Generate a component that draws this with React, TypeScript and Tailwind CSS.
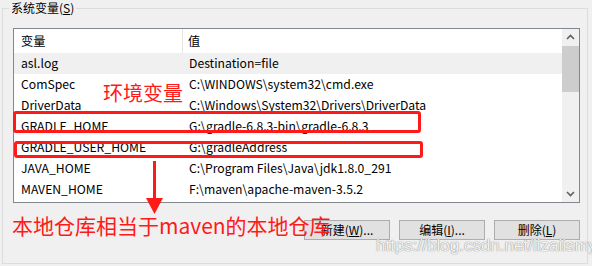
const rows = [
  ["asl.log", "Destination=file"],
  ["ComSpec", "C:\\WINDOWS\\system32\\cmd.exe"],
  ["DriverData", "C:\\Windows\\System32\\Drivers\\DriverData"],
  ["GRADLE_HOME", "G:\\gradle-6.8.3-bin\\gradle-6.8.3"],
  ["GRADLE_USER_HOME", "G:\\gradleAddress"],
  ["JAVA_HOME", "C:\\Program Files\\Java\\jdk1.8.0_291"],
  ["MAVEN_HOME", "F:\\maven\\apache-maven-3.5.2"],
];

const ui = { fontFamily: '"Noto Sans CJK SC", "Noto Sans", sans-serif' };

function WinButton({ label, keyChar }: { label: string; keyChar: string }) {
  return (
    <button className="w-[86px] h-[20px] bg-[#e1e1e1] border border-[#adadad] text-[12px] leading-[18px] text-black">
      {label}(<span className="underline">{keyChar}</span>)
      {keyChar !== "L" && "..."}
    </button>
  );
}

export default function App() {
  return (
    <div className="relative w-[592px] h-[266px] bg-[#f0f0f0] overflow-hidden" style={ui}>
      {/* group box */}
      <div className="relative ml-[2px] mt-[8px] w-[586px] h-[256px] border border-[#dcdcdc] px-[10px] pt-[19px]">
        <div className="absolute left-[6px] top-[-10px] px-[2px] bg-[#f0f0f0] text-[12px] leading-[18px] text-black">
          系统变量(<span className="underline">S</span>)
        </div>

        {/* list view */}
        <div className="flex w-[567px] h-[175px] border border-[#828790] bg-white">
          <div className="flex-1 flex flex-col text-[12.2px] text-black">
            <div className="flex h-[24px] items-center">
              <div className="w-[169px] h-full pl-[7px] flex items-center border-r border-[#e5e5e5]">变量</div>
              <div className="pl-[5px]">值</div>
            </div>
            {rows.map(([name, value], i) => (
              <div
                key={name}
                className={`flex h-[21px] items-center ${i === 0 ? "bg-[#f0f0f0]" : ""}`}
              >
                <div className="w-[169px] pl-[7px]">{name}</div>
                <div className="pl-[6px] whitespace-nowrap">{value}</div>
              </div>
            ))}
          </div>
          {/* scrollbar */}
          <div className="w-[17px] h-full bg-[#f0f0f0] flex flex-col items-center">
            <svg width="17" height="17" viewBox="0 0 17 17" className="shrink-0">
              <path d="M5 10 L8.5 6.5 L12 10" stroke="#606060" strokeWidth="1.6" fill="none" />
            </svg>
            <div className="w-[17px] h-[46px] bg-[#cdcdcd]" />
            <div className="flex-1" />
            <svg width="17" height="17" viewBox="0 0 17 17" className="shrink-0">
              <path d="M5 7 L8.5 10.5 L12 7" stroke="#606060" strokeWidth="1.6" fill="none" />
            </svg>
          </div>
        </div>

        {/* buttons */}
        <div className="flex justify-end gap-[9px] mt-[17px] w-[567px]">
          <WinButton label="新建" keyChar="W" />
          <WinButton label="编辑" keyChar="I" />
          <WinButton label="删除" keyChar="L" />
        </div>
      </div>

      {/* annotations */}
      <div className="absolute left-[13px] top-[111px] w-[408px] h-[22px] border-[3px] border-[#ff1a1a] rounded-[3px]" />
      <div className="absolute left-[14px] top-[141px] w-[409px] h-[17px] border-[3px] border-[#ff1a1a] rounded-[3px]" />
      <div className="absolute left-[103px] top-[80px] text-[20px] leading-[26px] text-[#ff1a1a]">环境变量</div>
      <svg className="absolute left-[144px] top-[161px]" width="20" height="54" viewBox="0 0 20 54">
        <path d="M9 0 L12 0 L12 37 L19 37 L10.5 53 L2 37 L9 37 Z" fill="#ff1a1a" />
      </svg>
      <div className="absolute left-[12px] top-[211px] text-[21px] leading-[28px] text-[#ff1a1a] whitespace-nowrap">
        本地仓库相当于maven的本地仓库
      </div>
      <div
        className="absolute left-[376px] top-[235px] text-[17px] leading-[22px] text-white/90 whitespace-nowrap"
        style={{
          fontFamily: '"Liberation Sans", Arial, sans-serif',
          textShadow: "0 0 1px rgba(110,110,110,0.7), 0 0 1px rgba(110,110,110,0.7)",
        }}
      >
        https://blog.csdn.net/lizaiismy
      </div>
    </div>
  );
}
